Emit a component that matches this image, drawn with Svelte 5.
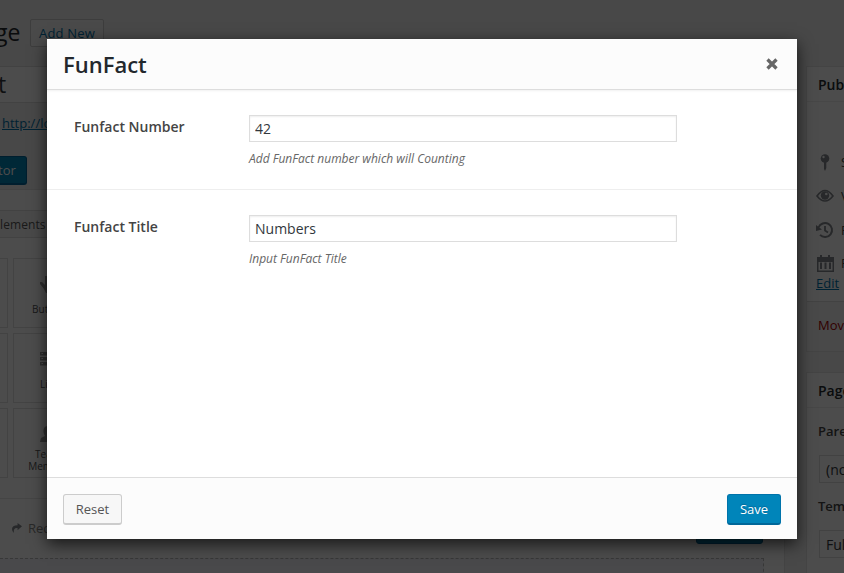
<script>
  let number = $state('42');
  let title = $state('Numbers');
  const tiles = [{ icon: 'button', label: 'Button' }, { icon: 'list', label: 'List' }, { icon: 'member', label: 'Team Member' }];
  const rows = [
    { icon: 'pin', text: 'Status:' },
    { icon: 'eye', text: 'Visibility:' },
    { icon: 'history', text: 'Revisions:' },
    { icon: 'calendar', text: 'Published' }
  ];
</script>

<div class="screen">
  <div class="page">
    <main>
      <div class="heading"><h1>ge</h1><span class="add">Add New</span></div>
      <div class="titlebox">t</div>
      <div class="permalink"><span>http://lo</span></div>
      <div class="builder-switch">tor</div>
      <section class="builder">
        <div class="tabs">lements</div>
        <div class="tiles">
          {#each tiles as tile}
            <div class="tile edge"></div>
            <div class="tile">
              <span class="glyph">
                {#if tile.icon === 'button'}
                  <svg width="16" height="18" viewBox="0 0 16 18"><path d="M5 1h5v6h3q2 0 2 2v4l-3 5H6L4 14 0 9V7h2l3 3z" /></svg>
                {:else if tile.icon === 'list'}
                  <svg width="16" height="14" viewBox="0 0 16 14"><path d="M0 0h16v3.500H0zM0 5h16v3.500H0zM0 10h16v3.500H0z" /><path d="M1.500 1h1.500v1H1.500zM1.500 6h1.500v1H1.500zM1.500 11h1.500v1H1.500z" fill="#fff" /></svg>
                {:else}
                  <svg width="16" height="16" viewBox="0 0 16 16"><path d="M8 0C3 0 3 5 4 8l1 2-4 2-1 4h16l-1-4-4-2 1-2c1-3 1-8-4-8z" /></svg>
                {/if}
              </span>
              <span class="label">{tile.label}</span>
            </div>
          {/each}
        </div>
        <div class="history-bar">
          <svg width="10" height="10" viewBox="0 0 9 9"><path d="M5 0l4 3-4 3.500V4.500Q1 4 1.700 9 0 8 0 5.500 0 2 5 2z" /></svg>
          <span>Redo</span><i></i>
        </div>
        <div class="canvas"></div>
      </section>
    </main>

    <aside>
      <section class="box publish">
        <h2>Publish</h2>
        <div class="info">
          {#each rows as row}
            <div class="info-row">
              <span class="info-icon">
                {#if row.icon === 'pin'}
                  <svg width="18" height="18" viewBox="0 0 18 18"><circle cx="9" cy="5.500" r="4.300" /><path d="M8 8h2.300v7L9 18l-1-2z" /><circle cx="7.500" cy="4" r="1.200" fill="#fff" /></svg>
                {:else if row.icon === 'eye'}
                  <svg width="18" height="14" viewBox="0 0 18 14"><path d="M1 7Q9-4 17 7 9 17 1 7z" fill="none" stroke="#82878c" stroke-width="1.600" /><circle cx="9" cy="6.500" r="4.200" /><circle cx="10.300" cy="5" r="1.300" fill="#fff" /></svg>
                {:else if row.icon === 'history'}
                  <svg width="18" height="18" viewBox="0 0 18 18"><path d="M2.500 6.500A7 7 0 1 1 4 13.900" fill="none" stroke="#82878c" stroke-width="2" /><path d="M0 4l6 4.500L0 10z" /><path d="M9 5v4.500l3 2" fill="none" stroke="#82878c" stroke-width="1.800" /></svg>
                {:else}
                  <svg width="17" height="17" viewBox="0 0 17 17"><path d="M0 2h3V0h2v2h6V0h2v2h4v15H0z" /><path d="M1.500 6h14v9.500h-14z" fill="#fff" /><path d="M3 7.500h2V14H3zM7.500 7.500h2V14h-2zM12 7.500h2V14h-2zM1 6h15v1H1z" /></svg>
                {/if}
              </span>
              <span>{row.text}</span>
            </div>
          {/each}
          <span class="edit">Edit</span>
        </div>
        <div class="trash">Move to Trash</div>
      </section>
      <section class="box attributes">
        <h2>Page Attributes</h2>
        <strong>Parent</strong>
        <div class="select">(no parent)</div>
        <strong>Template</strong>
        <div class="select">Full Width</div>
      </section>
    </aside>
  </div>

  <div class="shade"></div>

  <div class="modal" role="dialog" aria-label="FunFact">
    <header>
      <h3>FunFact</h3>
      <svg width="12" height="12" viewBox="0 0 12 12"><path d="M1.500 1.500l9 9M10.500 1.500l-9 9" fill="none" stroke="#666" stroke-width="3.300" /></svg>
    </header>
    <div class="fields">
      <div class="field">
        <label for="number">Funfact Number</label>
        <div class="control"><input id="number" bind:value={number} /><em>Add FunFact number which will Counting</em></div>
      </div>
      <div class="field last">
        <label for="title">Funfact Title</label>
        <div class="control"><input id="title" bind:value={title} /><em>Input FunFact Title</em></div>
      </div>
    </div>
    <footer><button class="reset">Reset</button><button class="save">Save</button></footer>
  </div>
</div>

<style>
  :global(body) { overflow: hidden; }
  * { box-sizing: border-box; }
  .screen { position: relative; width: 844px; height: 573px; overflow: hidden; background: #f1f1f1; font: 13px/18px "Open Sans", sans-serif; color: #444; }
  .page { display: flex; gap: 21px; height: 573px; }
  h1, h2, h3 { margin: 0; }
  svg { display: block; fill: #82878c; flex: none; }

  main { width: 785px; flex: none; }
  .heading { display: flex; height: 66px; padding-top: 19px; }
  h1 { width: 30px; margin-left: -5px; font-size: 23px; line-height: 27px; font-weight: 400; color: #23282d; }
  .add { width: 74px; height: 28px; margin-left: 5px; border: 1px solid #ccc; border-radius: 2px; background: #f7f7f7; padding-left: 8px; font-size: 13px; line-height: 27px; font-weight: 500; letter-spacing: .2px; color: #0073aa; white-space: nowrap; }
  .titlebox { height: 37px; border: 1px solid #ddd; border-left: 0; background: #fff; font-size: 23px; line-height: 35px; text-indent: -2px; color: #32373c; }
  .permalink { height: 53px; padding: 11px 0 0 2px; color: #0073aa; text-decoration: underline; }
  .builder-switch { width: 27px; height: 29px; border: 1px solid #006799; border-left: 0; border-bottom-width: 2px; border-radius: 0 3px 3px 0; background: #0085ba; color: #fff; line-height: 27px; text-indent: -2px; }
  .builder { height: 388px; margin-top: 4px; border: 1px solid #e5e5e5; border-left: 0; background: #fff; }
  .tabs { height: 28px; margin-top: 20px; border-top: 1px solid #ddd; border-bottom: 1px solid #ddd; background: #f5f5f5; font-size: 12px; line-height: 28px; letter-spacing: .1px; color: #555; }
  .tiles { display: grid; grid-template-columns: 8px 70px; gap: 5px; margin-top: 20px; }
  .tile { display: flex; flex-direction: column; align-items: center; height: 70px; border: 1px solid #e2e2e2; padding-top: 9px; font-size: 10px; line-height: 12px; text-align: center; color: #555; }
  .edge { border-left: 0; }
  .glyph { height: 32px; flex: none; display: flex; align-items: center; }
  .glyph svg { fill: #999; }
  .label { display: flex; align-items: center; width: 44px; height: 17px; justify-content: center; flex: none; }
  .tile:last-child .label { height: 20px; }
  .history-bar { display: flex; align-items: center; gap: 6px; height: 60px; margin-top: 20px; border-top: 1px solid #e8e8e8; padding-left: 12px; font-size: 13px; color: #888; }
  .history-bar > span, .history-bar > svg { margin-bottom: 2px; }
  .history-bar i { width: 67px; height: 30px; margin: 0 21px 0 auto; border-radius: 3px; background: #0085ba; border: 1px solid #006799; }
  .canvas { width: 764px; height: 30px; border: 1px dashed #bbb; border-left: 0; background: #f4f6fa; }

  aside { flex: none; width: 280px; padding-top: 66px; }
  .box { border: 1px solid #e5e5e5; background: #fff; }
  h2 { height: 35px; border-bottom: 1px solid #eee; padding-left: 11px; font-size: 14px; line-height: 35px; font-weight: 600; color: #23282d; }
  .publish { height: 286px; }
  .info { height: 199px; padding: 43px 9px 0; }
  .info-row { display: flex; align-items: center; gap: 7px; height: 34px; }
  .info-icon { width: 18px; display: flex; justify-content: center; }
  .info-row:nth-child(4) { height: 32px; }
  .edit { display: block; margin-top: -5px; color: #0073aa; text-decoration: underline; }
  .trash { height: 50px; border-top: 1px solid #ddd; background: #f5f5f5; padding-left: 11px; line-height: 47px; color: #a00; }
  .attributes { height: 260px; margin-top: 20px; }
  .attributes strong { display: block; margin: 14px 0 0 11px; font-weight: 600; }
  .select { width: 200px; height: 28px; margin: 15px 0 0 12px; border: 1px solid #ddd; padding-left: 6px; font-size: 14px; line-height: 27px; color: #32373c; }

  .shade { position: absolute; inset: 0; background: #000; opacity: .7; }

  .modal { position: absolute; left: 47px; top: 39px; display: flex; flex-direction: column; width: 750px; height: 500px; background: #fff; box-shadow: 0 5px 15px rgba(0, 0, 0, .7); }
  header { display: flex; align-items: center; justify-content: space-between; height: 51px; flex: none; border-bottom: 1px solid #ddd; background: #fcfcfc; padding: 0 19px 0 16px; box-shadow: 0 1px 2px rgba(0, 0, 0, .06); }
  h3 { font-size: 22px; line-height: 50px; font-weight: 600; color: #23282d; }
  .fields { flex: 1; }
  .field { display: flex; height: 100px; border-bottom: 1px solid #eee; padding: 25px 27px 0; }
  .last { border: 0; }
  label { width: 175px; padding-top: 2px; font-size: 14px; line-height: 20px; font-weight: 600; color: #444; }
  .control { width: 428px; }
  input { display: block; width: 428px; height: 27px; border: 1px solid #ddd; padding: 3px 5px; font: 14px "Open Sans", sans-serif; color: #32373c; box-shadow: inset 0 1px 2px rgba(0, 0, 0, .07); }
  em { display: block; margin-top: 8px; font-size: 12px; line-height: 18px; color: #666; }
  footer { display: flex; align-items: flex-start; justify-content: space-between; height: 62px; flex: none; border-top: 1px solid #ddd; background: #fcfcfc; padding: 16px; }
  button { height: 31px; border-radius: 3px; padding: 0; font: 13px/28px "Open Sans", sans-serif; }
  .reset { width: 59px; border: 1px solid #ccc; border-bottom-width: 2px; background: #f7f7f7; color: #555; }
  .save { width: 54px; border: 1px solid #0073aa; border-bottom: 2px solid #006799; background: #0085ba; color: #fff; font-weight: 500; text-shadow: 0 -1px 1px #006799; }
</style>
